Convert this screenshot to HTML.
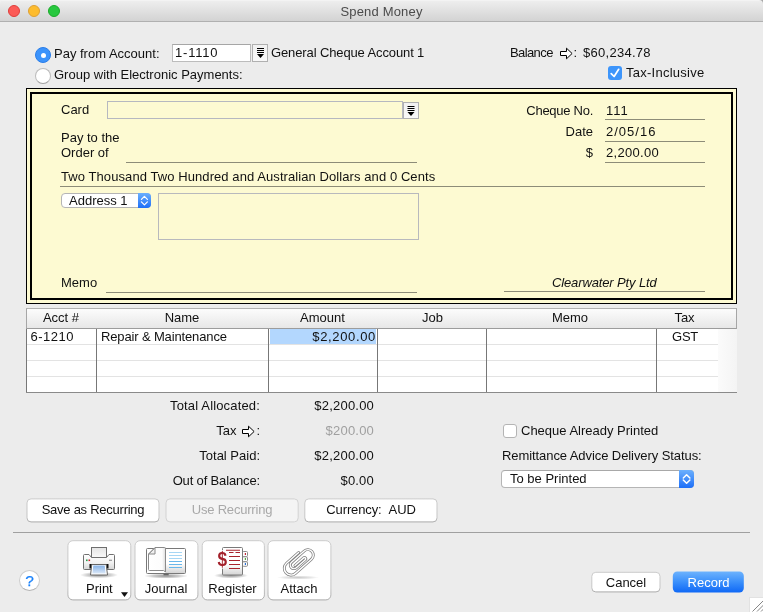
<!DOCTYPE html>
<html><head><meta charset="utf-8"><title>Spend Money</title>
<style>
html,body{margin:0;padding:0;}
body{width:763px;height:612px;overflow:hidden;background:#ececec;position:relative;font-family:"Liberation Sans",sans-serif;font-size:13px;color:#111;}
.a{position:absolute;white-space:nowrap;line-height:16px;}
.r{text-align:right;}
.c{text-align:center;}
.n{letter-spacing:0.2px;}
#tb{left:0;top:0;width:763px;height:22px;background:linear-gradient(#f6f6f6 0,#ededed 1.5px,#d3d3d3 21px);border-bottom:1px solid #b0b0b0;box-sizing:border-box;border-radius:4px 4px 0 0;}
.tl{position:absolute;top:5px;width:12px;height:12px;border-radius:50%;box-sizing:border-box;}
.ln{position:absolute;height:1px;background:#8d8c78;}
.btn{position:absolute;box-sizing:border-box;background:#fff;border:1px solid #c9c9c9;border-bottom-color:#adadad;border-radius:4px;text-align:center;line-height:21px;}
.dd{position:absolute;box-sizing:border-box;border:1px solid #b0b0b0;background:linear-gradient(#f1f1f1,#f8f8f8);}
svg{position:absolute;overflow:visible;}
#wrap{position:absolute;left:0;top:0;width:763px;height:612px;will-change:transform;}
</style></head><body><div id="wrap">
<div style="position:absolute;left:0;top:0;width:380px;height:10px;background:#f2f2f2"></div><div style="position:absolute;left:380px;top:0;width:383px;height:10px;background:#a6a6a6"></div>
<div id="tb" class="a"></div>
<div class="tl" style="left:8px;background:#fc5b57;border:0.5px solid #df3e3b"></div>
<div class="tl" style="left:28px;background:#fdbc2e;border:0.5px solid #dea034"></div>
<div class="tl" style="left:48px;background:#28c83f;border:0.5px solid #1aab29"></div>
<div class="a c" style="left:0;width:763px;top:4px;color:#4b4b4b;letter-spacing:0.18px">Spend Money</div>

<!-- top row -->
<div class="a" style="left:35px;top:47px;width:16px;height:16px;border-radius:50%;background:#3b93fb;box-sizing:border-box;border:0.5px solid #2a7de8"></div>
<div class="a" style="left:40.5px;top:52.5px;width:5px;height:5px;border-radius:50%;background:#fff"></div>
<div class="a" style="left:35px;top:68px;width:16px;height:16px;border-radius:50%;background:#fff;box-sizing:border-box;border:1px solid #bcbcbc;border-bottom-color:#a0a0a0"></div>
<div class="a" style="left:54px;top:46px">Pay from Account:</div>
<div class="a" style="left:54px;top:67px">Group with Electronic Payments:</div>
<div class="a" style="left:172px;top:44px;width:79px;height:18px;box-sizing:border-box;border:1px solid #bcbcbc;border-top-color:#a6a6a6;background:#fff;"></div>
<div class="a" style="left:175px;top:44.5px;letter-spacing:0.8px">1-1110</div>
<div class="dd" style="left:252px;top:44px;width:16px;height:18px;"></div>
<svg style="left:252px;top:44px" width="16" height="18"><path d="M5 4.5h7M5 6.5h7M5 8.5h7" stroke="#000" stroke-width="1"/><path d="M5 10h7l-3.5 4z" fill="#000"/></svg>
<div class="a" style="left:271px;top:45px;letter-spacing:-0.12px">General Cheque Account 1</div>
<div class="a" style="left:510px;top:45px;letter-spacing:-0.6px">Balance</div>
<svg style="left:0;top:0" width="763" height="612"><path d="M560.5 51.5h6v-3.3l5.6 5.3-5.6 5.3v-3.3h-6z" fill="#fff" stroke="#000" stroke-width="1"/><path d="M242.5 429.5h6v-3.3l5.6 5.3-5.6 5.3v-3.3h-6z" fill="#fff" stroke="#000" stroke-width="1"/></svg>
<div class="a" style="left:573.500px;top:45px">:</div>
<div class="a" style="left:583px;top:45px;letter-spacing:0.27px">$60,234.78</div>
<div class="a" style="left:608px;top:66px;width:14px;height:14px;border-radius:3px;background:#3d95fb"></div>
<svg style="left:608px;top:66px" width="14" height="14"><path d="M3.2 7.6l2.9 2.9 4.6-7.2" fill="none" stroke="#fff" stroke-width="1.7" stroke-linecap="round" stroke-linejoin="round"/></svg>
<div class="a" style="left:626px;top:65px;letter-spacing:0.25px">Tax-Inclusive</div>

<!-- cheque -->
<div class="a" style="left:26px;top:88px;width:711px;height:216px;box-sizing:border-box;border:1px solid #000;background:#fdfad2"></div>
<div class="a" style="left:30px;top:92px;width:703px;height:208px;box-sizing:border-box;border:2px solid #000;"></div>
<div class="a" style="left:61px;top:102px">Card</div>
<div class="a" style="left:107px;top:101px;width:296px;height:18px;box-sizing:border-box;border:1px solid #b6b8c0"></div>
<div class="dd" style="left:403px;top:102px;width:16px;height:17px;"></div>
<svg style="left:403px;top:101px" width="16" height="18"><path d="M4.5 5.5h7M4.5 7.5h7M4.5 9.5h7" stroke="#000" stroke-width="1"/><path d="M4.500 11h7l-3.500 4z" fill="#000"/></svg>
<div class="a" style="left:61px;top:130px">Pay to the</div>
<div class="a" style="left:61px;top:145px">Order of</div>
<div class="ln" style="left:126px;top:162px;width:291px"></div>
<div class="a" style="left:61px;top:169px;letter-spacing:0.08px">Two Thousand Two Hundred and Australian Dollars and 0 Cents</div>
<div class="ln" style="left:60px;top:186px;width:645px"></div>
<div class="a r" style="left:500px;width:93px;top:103px;letter-spacing:-0.27px">Cheque No.</div>
<div class="a" style="left:606px;top:103px;letter-spacing:1px">111</div>
<div class="ln" style="left:605px;top:119px;width:100px"></div>
<div class="a r" style="left:500px;width:93px;top:124px">Date</div>
<div class="a" style="left:606px;top:124px;letter-spacing:1px">2/05/16</div>
<div class="ln" style="left:605px;top:141px;width:100px"></div>
<div class="a r" style="left:500px;width:93px;top:145px">$</div>
<div class="a" style="left:606px;top:145px;letter-spacing:0.3px">2,200.00</div>
<div class="ln" style="left:605px;top:162px;width:100px"></div>
<div class="a" style="left:61px;top:193px;width:90px;height:15px;box-sizing:border-box;border-radius:4px;background:#fff;border:0.5px solid #b5b5b5;line-height:14px;padding-left:7px">Address 1</div>
<div class="a" style="left:138px;top:193px;width:13px;height:15px;border-radius:0 4px 4px 0;background:linear-gradient(#6cb0fd,#1d6ff8)"></div>
<svg style="left:138px;top:193px" width="13" height="15"><path d="M3.400 6.400L6.400 3.400L9.400 6.400M3.400 8.800L6.400 11.800L9.400 8.800" fill="none" stroke="#fff" stroke-width="1.2" stroke-linecap="round" stroke-linejoin="round"/></svg>
<div class="a" style="left:158px;top:193px;width:261px;height:47px;box-sizing:border-box;border:1px solid #b8b9bd"></div>
<div class="a" style="left:61px;top:275px">Memo</div>
<div class="ln" style="left:106px;top:292px;width:311px"></div>
<div class="a" style="left:552px;top:275px;font-style:italic;letter-spacing:-0.13px">Clearwater Pty Ltd</div>
<div class="ln" style="left:504px;top:291px;width:201px"></div>

<!-- table -->
<div class="a" style="left:26px;top:329px;width:692px;height:63px;background:#fff"></div>
<div class="a" style="left:718px;top:329px;width:19px;height:63px;background:linear-gradient(90deg,#fbfbfb,#f4f4f4)"></div>
<div class="a" style="left:27px;top:344px;width:691px;height:1px;background:#e3e3e3"></div>
<div class="a" style="left:27px;top:360px;width:691px;height:1px;background:#e3e3e3"></div>
<div class="a" style="left:27px;top:376px;width:691px;height:1px;background:#e3e3e3"></div>
<div class="a" style="left:26px;top:329px;width:1px;height:63px;background:#777"></div>
<div class="a" style="left:96px;top:329px;width:1px;height:63px;background:#777"></div>
<div class="a" style="left:268px;top:329px;width:1px;height:63px;background:#777"></div>
<div class="a" style="left:377px;top:329px;width:1px;height:63px;background:#777"></div>
<div class="a" style="left:486px;top:329px;width:1px;height:63px;background:#777"></div>
<div class="a" style="left:656px;top:329px;width:1px;height:63px;background:#777"></div>
<div class="a" style="left:26px;top:392px;width:711px;height:1px;background:#8a8a8a"></div>
<div class="a" style="left:26px;top:308px;width:711px;height:21px;box-sizing:border-box;background:linear-gradient(#fcfcfc,#e7e7e7);border:1px solid #a6a6a6;border-top-color:#b2b2b2;border-bottom-color:#9c9c9c"></div>
<div class="a c" style="left:26px;width:70px;top:310px">Acct #</div>
<div class="a c" style="left:96px;width:172px;top:310px">Name</div>
<div class="a c" style="left:268px;width:109px;top:310px">Amount</div>
<div class="a c" style="left:378px;width:109px;top:310px">Job</div>
<div class="a c" style="left:485px;width:170px;top:310px">Memo</div>
<div class="a c" style="left:656px;width:57px;top:310px">Tax</div>
<div class="a" style="left:270px;top:329px;width:106px;height:15px;background:#b3d7fe"></div>
<div class="a" style="left:30.5px;top:329px;letter-spacing:0.48px">6-1210</div>
<div class="a" style="left:101px;top:329px;letter-spacing:-0.14px">Repair &amp; Maintenance</div>
<div class="a r" style="left:270px;width:106px;top:329px;letter-spacing:0.65px">$2,200.00</div>
<div class="a c" style="left:656px;width:58px;top:329px;letter-spacing:-0.3px">GST</div>

<svg style="left:0;top:0" width="763" height="612">
<defs><linearGradient id="bb" x1="0" y1="0" x2="0" y2="1"><stop offset="0" stop-color="#cbcbcb"/><stop offset="0.8" stop-color="#c4c4c4"/><stop offset="1" stop-color="#a9a9a9"/></linearGradient></defs>
<rect x="27" y="498.900" width="132" height="23" rx="4" fill="#fff" stroke="url(#bb)"/>
<rect x="166" y="498.900" width="132.200" height="23" rx="4" fill="#f4f4f4" stroke="#d2d2d2"/>
<rect x="304.800" y="498.900" width="132.200" height="23" rx="4" fill="#fff" stroke="url(#bb)"/>
</svg>
<!-- totals -->
<div class="a r" style="left:100px;width:160px;top:398px;letter-spacing:0.16px">Total Allocated:</div>
<div class="a r" style="left:100px;width:136.500px;top:423px">Tax</div>
<div class="a" style="left:256.500px;top:423px">:</div>
<div class="a r" style="left:100px;width:160px;top:448px">Total Paid:</div>
<div class="a r" style="left:100px;width:160px;top:473px;letter-spacing:-0.15px">Out of Balance:</div>
<div class="a r n" style="left:273px;width:101px;top:398px">$2,200.00</div>
<div class="a r n" style="left:273px;width:101px;top:423px;color:#a0a0a0">$200.00</div>
<div class="a r n" style="left:273px;width:101px;top:448px">$2,200.00</div>
<div class="a r n" style="left:273px;width:101px;top:473px">$0.00</div>
<div class="a c" style="left:27px;width:132px;top:502px;letter-spacing:-0.25px">Save as Recurring</div>
<div class="a c" style="left:166px;width:132px;top:502px;letter-spacing:-0.2px;color:#a9a9a9">Use Recurring</div>
<div class="a c" style="left:305px;width:132px;top:502px;letter-spacing:-0.12px">Currency: &nbsp;AUD</div>
<div class="a" style="left:503px;top:424px;width:14px;height:14px;box-sizing:border-box;border-radius:3px;background:#fff;border:1px solid #b4b4b4"></div>
<div class="a" style="left:521px;top:423px">Cheque Already Printed</div>
<div class="a" style="left:502px;top:448px;letter-spacing:-0.08px">Remittance Advice Delivery Status:</div>
<div class="a" style="left:501px;top:470px;width:193px;height:18px;box-sizing:border-box;border-radius:4px;background:#fff;border:0.5px solid #b5b5b5;border-top-color:#a8a8a8;line-height:16px;padding-left:8px">To be Printed</div>
<div class="a" style="left:679px;top:470px;width:15px;height:18px;border-radius:0 4px 4px 0;background:linear-gradient(#6cb0fd,#1d6ff8)"></div>
<svg style="left:679px;top:470px" width="15" height="18"><path d="M4.300 8L7.600 4.700L10.900 8M4.300 10L7.600 13.300L10.900 10" fill="none" stroke="#fff" stroke-width="1.500" stroke-linecap="round" stroke-linejoin="round"/></svg>

<!-- bottom -->
<div class="a" style="left:13px;top:532px;width:737px;height:1px;background:#a0a0a0"></div>
<div class="a c" style="left:19px;top:570px;width:21px;height:21px;box-sizing:border-box;border-radius:50%;background:#fff;border:1px solid #cdcdcd;border-bottom-color:#b3b3b3;color:#1a82fb;line-height:19px;font-size:15.5px;-webkit-text-stroke:0.25px #1a82fb">?</div>
<svg style="left:0;top:0" width="763" height="612">
<rect x="67.900" y="540.700" width="62.900" height="59.200" rx="5" fill="#fff" stroke="url(#bb)"/>
<rect x="135" y="540.700" width="62.900" height="59.200" rx="5" fill="#fff" stroke="url(#bb)"/>
<rect x="202.200" y="540.700" width="62.200" height="59.200" rx="5" fill="#fff" stroke="url(#bb)"/>
<rect x="268" y="540.700" width="62.900" height="59.200" rx="5" fill="#fff" stroke="url(#bb)"/>
</svg>
<div class="a" style="left:86px;top:581px">Print</div>
<div class="a c" style="left:134px;width:64px;top:581px">Journal</div>
<div class="a c" style="left:201px;width:63px;top:581px">Register</div>
<div class="a c" style="left:267px;width:64px;top:581px">Attach</div>
<!--ICONS-->
<svg style="left:0;top:0" width="763" height="612">
<defs>
<linearGradient id="g1" x1="0" y1="0" x2="0" y2="1"><stop offset="0" stop-color="#e4e4e4"/><stop offset="1" stop-color="#f9f9f9"/></linearGradient>
<linearGradient id="g2" x1="0" y1="0" x2="0" y2="1"><stop offset="0" stop-color="#ffffff"/><stop offset="0.55" stop-color="#f2f2f2"/><stop offset="1" stop-color="#d6d6d6"/></linearGradient>
<linearGradient id="g3" x1="0" y1="0" x2="0" y2="1"><stop offset="0" stop-color="#86b2e6"/><stop offset="1" stop-color="#dbe8f8"/></linearGradient>
<linearGradient id="g4" x1="0" y1="0" x2="0" y2="1"><stop offset="0" stop-color="#ffffff"/><stop offset="0.6" stop-color="#ffffff"/><stop offset="1" stop-color="#d4d4d4"/></linearGradient>
<linearGradient id="g5" x1="0" y1="0" x2="1" y2="0"><stop offset="0" stop-color="#ffffff"/><stop offset="0.8" stop-color="#fcfcfc"/><stop offset="1" stop-color="#dcdcdc"/></linearGradient>
<radialGradient id="sh"><stop offset="0" stop-color="#000" stop-opacity="0.42"/><stop offset="0.6" stop-color="#000" stop-opacity="0.2"/><stop offset="1" stop-color="#000" stop-opacity="0"/></radialGradient>
</defs>
<!-- print -->
<ellipse cx="99" cy="575" rx="19" ry="3.2" fill="url(#sh)"/>
<rect x="91.5" y="547.5" width="15" height="10" fill="url(#g1)" stroke="#6e6e6e"/>
<path d="M83.5 555.5q0-1 1-1h4.5l2.5 3h15l2.500-3h4.5q1 0 1 1v13q0 1-1 1h-29q-1 0-1-1z" fill="url(#g2)" stroke="#707070"/>
<rect x="89.500" y="564" width="19" height="4.500" fill="#111"/>
<path d="M91.800 564.5h14.400l1.300 10.500h-17z" fill="#fff" stroke="#666"/>
<path d="M93.300 565.500h11.400l0.900 8h-13.200z" fill="url(#g3)"/>
<rect x="86" y="559.500" width="1.600" height="1.600" fill="#1fa04a"/><rect x="88.500" y="559.500" width="1.600" height="1.600" fill="#d81e2c"/>
<rect x="109" y="559.700" width="3" height="1.200" fill="#999"/>
<path d="M121 592.200h7l-3.500 4.800z" fill="#111"/>
<!-- journal -->
<ellipse cx="166" cy="576" rx="22" ry="2.600" fill="url(#sh)"/>
<rect x="146.500" y="548.500" width="39" height="25" rx="1" fill="#fff" stroke="#787878"/>
<rect x="166" y="549" width="19" height="24" fill="url(#g4)"/>
<rect x="163.500" y="573.500" width="5.200" height="1.800" fill="#666"/>
<path d="M148.500 554l6.500-6.500h9.500q1 0 1 1v23.500l-2-1.500h-14q-1 0-1-1z" fill="url(#g5)" stroke="#8a8a8a"/>
<path d="M148.800 554h6.200v-6.200z" fill="#f0f0f0" stroke="#8a8a8a" stroke-linejoin="round"/>
<path d="M165.500 548v24" stroke="#8a8a8a"/>
<path d="M169 552.500h13M169 555.500h13M169 558.500h13" stroke="#a6d6f4"/>
<path d="M169 561.500h13M169 564.500h13M169 567.500h13" stroke="#69b7ea"/>
<!-- register -->
<ellipse cx="231" cy="575.500" rx="17" ry="3" fill="url(#sh)"/>
<rect x="242.500" y="551.500" width="5" height="5" rx="1" fill="#fff" stroke="#8c8c8c"/>
<rect x="242.500" y="556.800" width="5" height="4.700" rx="1" fill="#fff" stroke="#8c8c8c"/>
<rect x="242.500" y="561.800" width="5" height="4.500" rx="1" fill="#fff" stroke="#8c8c8c"/>
<rect x="222.500" y="547.500" width="20" height="27.500" rx="1" fill="url(#g4)" stroke="#7a7a7a"/>
<rect x="244.800" y="553" width="1.200" height="2" fill="#c02836"/><rect x="244.800" y="558" width="1.200" height="2" fill="#56a944"/><rect x="244.800" y="563" width="1.200" height="2" fill="#2a6fd0"/>
<path d="M226 550.300h14M229 556.500h11M229 560.500h11M229 564.500h11M229 568.500h11" stroke="#a8232d" stroke-width="1.100"/>
<path d="M229 552.500h4.500M235.500 552.500h4.500" stroke="#a8232d" stroke-width="1.100"/>
<rect x="217" y="551" width="10.500" height="17" fill="#fff" opacity="0"/>
<text x="222.400" y="566.300" text-anchor="middle" font-family="Liberation Sans, sans-serif" font-weight="bold" font-size="19.500" fill="#a3212b" stroke="#fff" stroke-width="1.600" paint-order="stroke" textLength="9.600" lengthAdjust="spacingAndGlyphs">$</text>
<!-- attach -->
<ellipse cx="298" cy="577.500" rx="21" ry="2" fill="url(#sh)" opacity="0.5"/>
<g transform="translate(298.700 562.500) rotate(-41.600) scale(1.070)" fill="none" stroke-linecap="round" stroke-linejoin="round">
<path d="M6.1 -7H-9A6.3 6.3 0 0 0 -9 5.600H11A5.100 5.100 0 0 0 11 -4.600H-4.900A3.400 3.400 0 0 0 -4.900 2.200H6.300A1.200 1.200 0 0 0 6.300 -0.200H-4.500" stroke="#7e7e7e" stroke-width="2.700"/>
<path d="M6.1 -7H-9A6.3 6.3 0 0 0 -9 5.600H11A5.100 5.100 0 0 0 11 -4.600H-4.900A3.400 3.400 0 0 0 -4.900 2.200H6.300A1.200 1.200 0 0 0 6.300 -0.200H-4.500" stroke="#fff" stroke-width="1.300"/>
</g>
</svg>
<!--/ICONS-->
<svg style="left:0;top:0" width="763" height="612">
<defs><linearGradient id="rb" x1="0" y1="0" x2="0" y2="1"><stop offset="0" stop-color="#6db3fd"/><stop offset="0.5" stop-color="#3a8ffb"/><stop offset="1" stop-color="#0f68f6"/></linearGradient></defs>
<rect x="591.800" y="572.300" width="68.200" height="19.600" rx="4" fill="#fff" stroke="url(#bb)"/>
<rect x="672.800" y="571.500" width="71" height="21" rx="4.500" fill="url(#rb)"/>
</svg>
<div class="btn" style="left:591.5px;top:572.5px;width:69px;height:20px;line-height:18px;background:none;border-color:transparent">Cancel</div>
<div class="btn" style="left:673px;top:572.5px;width:71px;height:20px;line-height:18px;background:none;border-color:transparent;color:#fff">Record</div>
<div class="a" style="left:749px;top:597px;width:14px;height:15px;background:#fff;border-left:1px solid #e2e2e2;border-top:1px solid #e2e2e2"></div>
<svg style="left:0;top:0" width="763" height="612"><path d="M752.5 611.5l11-11M757 611.5l6.5-6.5M761 611.5l2.5-2.5" stroke="#858585" stroke-width="1" fill="none"/></svg>
</div></body></html>
